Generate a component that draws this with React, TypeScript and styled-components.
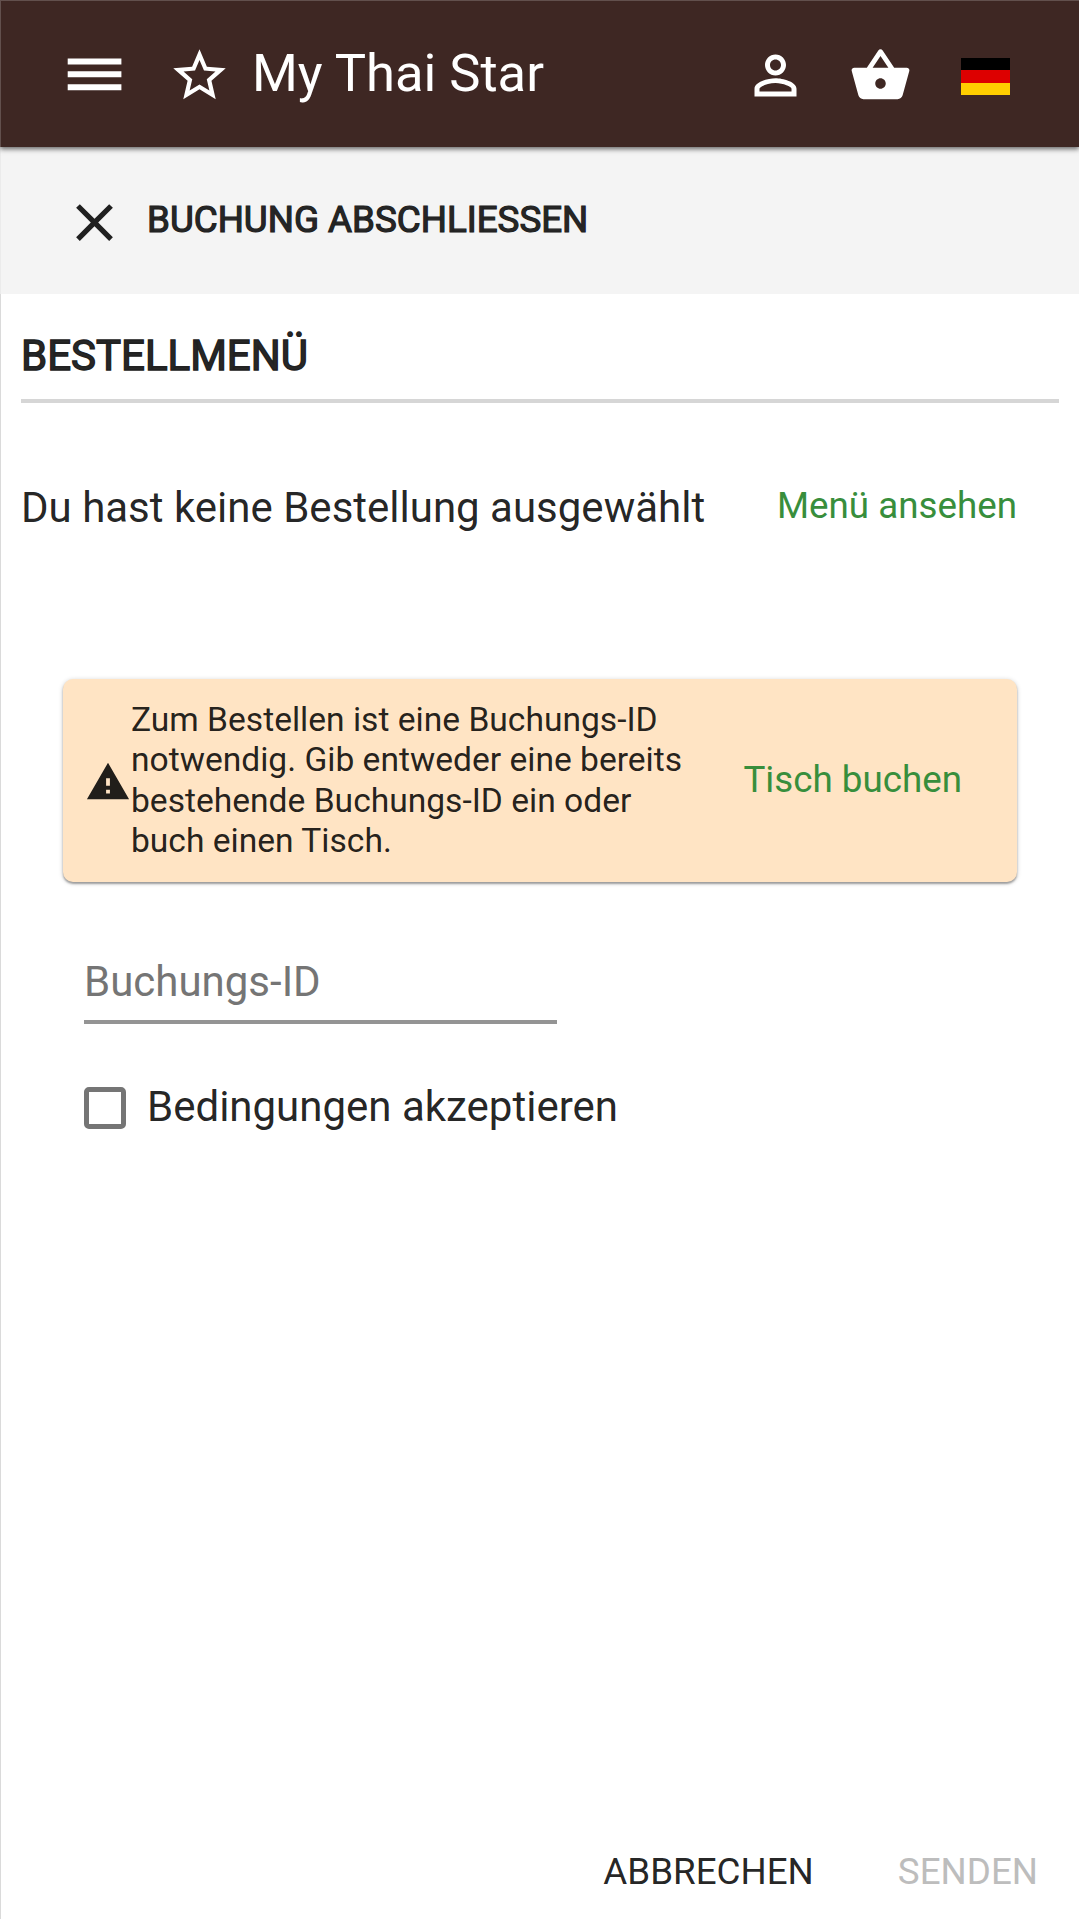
import React from "react";
import styled, { createGlobalStyle } from "styled-components";

const ink = "rgba(0, 0, 0, 0.87)";
const green = "#388e3c";

const GlobalStyle = createGlobalStyle`
  *, *::before, *::after { box-sizing: border-box; }
  body { margin: 0; background: #fff; }
`;

const Page = styled.div`
  display: flex;
  flex-direction: column;
  width: 1079px;
  height: 1919px;
  background: #fff;
  box-shadow: inset 1px 0 0 #dadada;
  color: ${ink};
  font-family: Roboto, "Liberation Sans", sans-serif;
  font-size: 42px;
  overflow: hidden;
`;

const Toolbar = styled.header`
  position: relative;
  z-index: 1;
  display: flex;
  align-items: center;
  flex: none;
  height: 147px;
  padding: 4px 69.5px 0 63px;
  background: #3e2723;
  color: #fff;
  box-shadow: inset 1px 1px 0 #62504d, 0 2px 5px rgba(0, 0, 0, 0.6);
`;

const Icon = styled.svg`
  display: block;
  flex: none;
  width: 63px;
  height: 63px;
  fill: currentColor;
`;

const CloseIcon = styled(Icon)`
  margin-top: 3px;
`;

const WarningIcon = styled(Icon)`
  width: 46px;
  height: 46px;
  margin-top: 3px;
`;

const Brand = styled.div`
  display: flex;
  align-items: center;
  flex: 1;
  margin-left: 42px;
`;

const Title = styled.h1`
  margin: -6px 0 0 21px;
  font-size: 52.5px;
  font-weight: 400;
  line-height: 60px;
  white-space: nowrap;
`;

const Actions = styled.div`
  display: flex;
  align-items: center;
  gap: 42px;
`;

const Flag = styled.div`
  display: grid;
  grid-template-rows: repeat(3, 1fr);
  width: 49px;
  height: 37.5px;
  margin: 2px 0 0 7px;
`;

const Stripe = styled.span<{ $color: string }>`
  background: ${(p) => p.$color};
`;

const SubBar = styled.div`
  display: flex;
  align-items: center;
  flex: none;
  height: 147px;
  padding-left: 63px;
  background: #f4f4f4;
  box-shadow: inset 1px 0 0 #ebebeb;
`;

const SubTitle = styled.h2`
  margin: -2px 0 0 21px;
  font-size: 36.75px;
  font-weight: 400;
  line-height: 44px;
  white-space: nowrap;
  -webkit-text-stroke: 1.2px #212121;
`;

const SectionTitle = styled.h3`
  margin: 0 20px 0 21px;
  padding-top: 31px;
  height: 109px;
  font-size: 42px;
  font-weight: 400;
  line-height: 61px;
  border-bottom: 4px solid #d6d6d6;
  -webkit-text-stroke: 1.4px #212121;
`;

const EmptyRow = styled.div`
  display: flex;
  align-items: center;
  justify-content: space-between;
  height: 94px;
  margin-top: 57px;
  padding: 0 62px 0 21px;
`;

const TextButton = styled.button<{ $color?: string }>`
  margin: 0 0 2px;
  padding: 0;
  border: 0;
  background: none;
  color: ${(p) => p.$color ?? ink};
  font: 400 36.75px/44px Roboto, "Liberation Sans", sans-serif;
  white-space: nowrap;
`;

const Notice = styled.div`
  display: flex;
  align-items: center;
  height: 203px;
  margin: 125px 62px 0 63px;
  padding: 0 55px 0 22px;
  border-radius: 10px;
  background: #ffe4c4;
  box-shadow: 0 2px 2px rgba(0, 0, 0, 0.3), 0 1px 5px rgba(0, 0, 0, 0.2);
`;

const NoticeText = styled.p`
  flex: 1;
  margin: 0;
  font-size: 33.6px;
  line-height: 40.4px;
  white-space: nowrap;
`;

const Form = styled.form`
  display: flex;
  flex-direction: column;
  align-items: flex-start;
  padding: 64px 84px 0;
`;

const Field = styled.input`
  width: 472.5px;
  height: 78px;
  padding: 0 0 4px;
  border: 0;
  border-bottom: 4px solid #949494;
  outline: none;
  background: none;
  color: ${ink};
  font: 400 42px/60px Roboto, "Liberation Sans", sans-serif;

  &::placeholder {
    color: #757575;
    opacity: 1;
  }
`;

const Terms = styled.label`
  display: flex;
  align-items: center;
  gap: 21px;
  height: 60px;
  margin-top: 54px;
  line-height: 60px;
  white-space: nowrap;
`;

const TermsText = styled.span`
  margin-top: -2px;
`;

const Checkbox = styled.input`
  appearance: none;
  width: 42px;
  height: 42px;
  margin: 0;
  border: 5px solid #757575;
  border-radius: 5px;
`;

const Footer = styled.footer`
  display: flex;
  justify-content: flex-end;
  gap: 84px;
  margin-top: auto;
  padding: 0 41px 23px 0;
`;

export default function App() {
  return (
    <>
      <GlobalStyle />
      <Page>
        <Toolbar>
          <Icon viewBox="0 0 63 63">
            <path d="M4.700 14.500h53.700v6H4.700zM4.700 27.200h53.700v6H4.700zM4.700 40.300h53.700v6H4.700z" />
          </Icon>
          <Brand>
            <Icon viewBox="0 0 24 24">
              <path d="M22 9.24l-7.19-.62L12 2 9.19 8.63 2 9.24l5.46 4.73L5.82 21 12 17.27 18.18 21l-1.63-7.03L22 9.24zM12 15.4l-3.76 2.27 1-4.28-3.32-2.88 4.38-.38L12 6.1l1.71 4.04 4.38.38-3.32 2.88 1 4.28L12 15.4z" />
            </Icon>
            <Title>My Thai Star</Title>
          </Brand>
          <Actions>
            <Icon viewBox="0 0 24 24">
              <path d="M12 5.900c1.160 0 2.100.94 2.100 2.100s-.94 2.100-2.100 2.100S9.900 9.160 9.900 8s.94-2.100 2.100-2.100m0 9c2.970 0 6.100 1.460 6.100 2.100v1.100H5.900V17c0-.64 3.130-2.100 6.100-2.100M12 4C9.790 4 8 5.790 8 8s1.790 4 4 4 4-1.790 4-4-1.790-4-4-4zm0 9c-2.670 0-8 1.340-8 4v3h16v-3c0-2.660-5.330-4-8-4z" />
            </Icon>
            <Icon viewBox="0 0 24 24">
              <path d="M17.210 9l-4.380-6.560c-.19-.28-.51-.42-.83-.42-.32 0-.64.14-.83.43L6.790 9H2c-.55 0-1 .45-1 1 0 .09.01.18.04.27l2.540 9.270c.23.84 1 1.460 1.920 1.460h13c.92 0 1.690-.62 1.930-1.460l2.540-9.270L23 10c0-.55-.45-1-1-1h-4.790zM9 9l3-4.400L15 9H9zm3 8c-1.100 0-2-.9-2-2s.9-2 2-2 2 .9 2 2-.9 2-2 2z" />
            </Icon>
            <Flag>
              <Stripe $color="#000" />
              <Stripe $color="#d00" />
              <Stripe $color="#ffce00" />
            </Flag>
          </Actions>
        </Toolbar>
        <SubBar>
          <CloseIcon viewBox="0 0 24 24">
            <path d="M19 6.41L17.59 5 12 10.59 6.41 5 5 6.41 10.59 12 5 17.59 6.41 19 12 13.41 17.59 19 19 17.59 13.41 12z" />
          </CloseIcon>
          <SubTitle>BUCHUNG ABSCHLIESSEN</SubTitle>
        </SubBar>
        <SectionTitle>BESTELLMENÜ</SectionTitle>
        <EmptyRow>
          <span>Du hast keine Bestellung ausgewählt</span>
          <TextButton $color={green}>Menü ansehen</TextButton>
        </EmptyRow>
        <Notice>
          <WarningIcon viewBox="0 0 24 24">
            <path d="M1 21h22L12 2 1 21zm12-3h-2v-2h2v2zm0-4h-2v-4h2v4z" />
          </WarningIcon>
          <NoticeText>
            Zum Bestellen ist eine Buchungs-ID
            <br />
            notwendig. Gib entweder eine bereits
            <br />
            bestehende Buchungs-ID ein oder
            <br />
            buch einen Tisch.
          </NoticeText>
          <TextButton $color={green}>Tisch buchen</TextButton>
        </Notice>
        <Form>
          <Field placeholder="Buchungs-ID" />
          <Terms>
            <Checkbox type="checkbox" />
            <TermsText>Bedingungen akzeptieren</TermsText>
          </Terms>
        </Form>
        <Footer>
          <TextButton>ABBRECHEN</TextButton>
          <TextButton $color="#bdbdbd">SENDEN</TextButton>
        </Footer>
      </Page>
    </>
  );
}
